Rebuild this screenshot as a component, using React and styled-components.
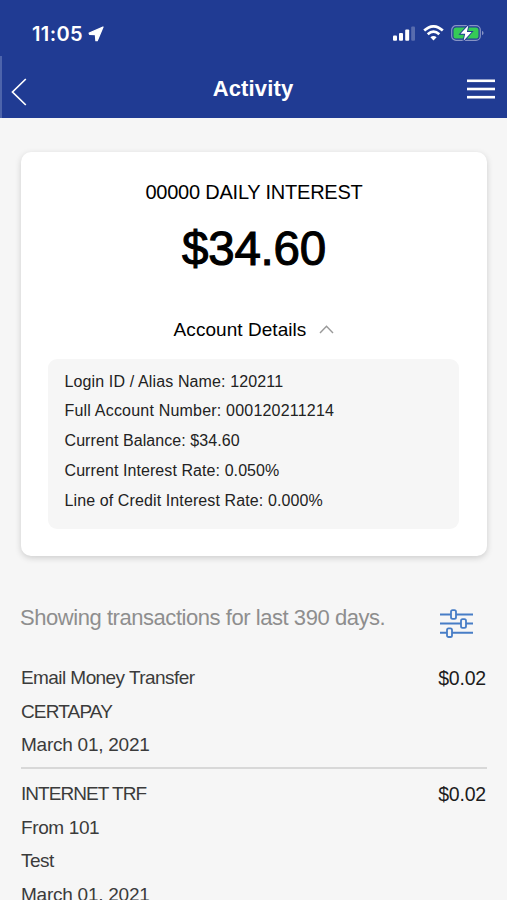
import React from 'react';
import styled, { createGlobalStyle } from 'styled-components';

const GlobalStyle = createGlobalStyle`
    * {
        box-sizing: border-box;
    }
    body {
        margin: 0;
        background-color: #f6f6f6;
        font-family: "Liberation Sans", Arial, sans-serif;
        color: #000;
        overflow: hidden;
    }
`;

const Screen = styled.div`
    width: 507px;
    height: 900px;
    display: flex;
    flex-direction: column;
    overflow: hidden;
`;

const Header = styled.header`
    height: 118px;
    flex-shrink: 0;
    background-color: #203b93;
    color: #fff;
`;

const StatusBar = styled.div`
    height: 56px;
    padding: 10px 23px 0 32px;
    display: flex;
    align-items: center;
    justify-content: space-between;
`;

const Clock = styled.div`
    display: flex;
    align-items: center;
    gap: 5px;
    padding-top: 1px;
    font-family: Inter, sans-serif;
    font-size: 20px;
    font-weight: 600;
    letter-spacing: 0.4px;
`;

const StatusIcons = styled.div`
    display: flex;
    align-items: center;
    gap: 7.5px;
`;

const NavBar = styled.div`
    height: 62px;
    padding: 4px 12px 0 9px;
    border-left: 2px solid #4d64ab;
    display: grid;
    grid-template-columns: 30px 1fr 30px;
    align-items: center;
`;

const Title = styled.h1`
    margin: 0;
    font-size: 22px;
    line-height: 26px;
    font-weight: 700;
    letter-spacing: 0.15px;
    text-align: center;
`;

const IconButton = styled.button`
    border: none;
    padding: ${props => props.$padding || '0'};
    background: none;
    color: inherit;
    display: flex;
    justify-content: ${props => props.$align || 'flex-start'};
`;

const Card = styled.section`
    width: 466px;
    height: 404px;
    margin: 34px 0 0 21px;
    padding: 25px 27px 27px;
    flex-shrink: 0;
    border-radius: 10px;
    background-color: #fff;
    box-shadow: 0 2px 6px rgba(0, 0, 0, 0.17);
`;

const AccountName = styled.div`
    font-size: 20px;
    line-height: 30px;
    letter-spacing: -0.22px;
    text-align: center;
`;

const Balance = styled.div`
    margin-top: 12px;
    font-size: 47.5px;
    line-height: 60px;
    letter-spacing: -0.2px;
    text-align: center;
    -webkit-text-stroke: 1.1px #000;
`;

const Toggle = styled.div`
    margin-top: 36px;
    display: flex;
    align-items: center;
    justify-content: center;
    gap: 13px;
    font-size: 19px;
    line-height: 30px;
    letter-spacing: 0.05px;
`;

const Details = styled.div`
    width: 411px;
    height: 170px;
    margin-top: 13.5px;
    padding: 8px 16.5px;
    border-radius: 9px;
    background-color: #f6f6f6;
`;

const Detail = styled.div`
    font-size: 16px;
    line-height: 29.9px;
    letter-spacing: ${props => props.$spacing || '0px'};
    color: #222;
`;

const Summary = styled.div`
    height: 34px;
    margin: 46px 34px 0 20px;
    display: flex;
    align-items: flex-start;
    justify-content: space-between;
    flex-shrink: 0;
`;

const SummaryText = styled.span`
    font-size: 22px;
    line-height: 32px;
    letter-spacing: -0.45px;
    color: #8e8e8e;
`;

const FilterIcon = styled.svg`
    margin-top: 6.5px;
`;

const List = styled.div`
    margin: 17px 20px 0 21px;
`;

const Row = styled.div`
    padding: 8px 0 5.5px;
    display: flex;
    justify-content: space-between;
    border-bottom: 2px solid #d8d8d8;
`;

const Line = styled.div`
    font-size: 19px;
    line-height: 33.6px;
    letter-spacing: ${props => props.$spacing || '0px'};
    color: #3b3b3b;
`;

const Amount = styled.div`
    padding-right: 1px;
    font-size: 19.5px;
    line-height: 34.4px;
    letter-spacing: -0.2px;
    color: #1c1c1c;
`;

const details = [
    { text: 'Login ID / Alias Name: 120211', spacing: '0.13px' },
    { text: 'Full Account Number: 000120211214', spacing: '0.2px' },
    { text: 'Current Balance: $34.60', spacing: '0.08px' },
    { text: 'Current Interest Rate: 0.050%', spacing: '0.08px' },
    { text: 'Line of Credit Interest Rate: 0.000%', spacing: '0.11px' }
];

const transactions = [
    {
        id: 1,
        amount: '$0.02',
        lines: [
            { text: 'Email Money Transfer', spacing: '-0.57px' },
            { text: 'CERTAPAY', spacing: '-0.85px' },
            { text: 'March 01, 2021', spacing: '-0.25px' }
        ]
    },
    {
        id: 2,
        amount: '$0.02',
        lines: [
            { text: 'INTERNET TRF', spacing: '-0.95px' },
            { text: 'From 101', spacing: '-0.38px' },
            { text: 'Test', spacing: '-0.55px' },
            { text: 'March 01, 2021', spacing: '-0.25px' }
        ]
    }
];

const LocationArrow = () => (
    <svg width="16" height="16" viewBox="0 0 16 16">
        <path d="M15 1 L1.2 7.2 L1.6 8.4 L7.4 8.7 L7.9 14.6 L9.2 14.7 Z" fill="#fff" stroke="#fff" strokeWidth="1.3" strokeLinejoin="round" />
    </svg>
);

const Signal = () => (
    <svg width="22" height="15" viewBox="0 0 22 15">
        <rect x="0" y="9.5" width="4" height="5.2" rx="1" fill="#fff" />
        <rect x="6" y="7" width="4" height="7.7" rx="1" fill="#fff" />
        <rect x="12.2" y="3.5" width="4" height="11.2" rx="1" fill="#fff" />
        <rect x="18.2" y="0.5" width="3.8" height="14.2" rx="1" fill="#fff" opacity="0.25" />
    </svg>
);

const Wifi = () => (
    <svg width="21" height="16" viewBox="0 0 21 16" fill="none" stroke="#fff" strokeWidth="2.7">
        <path d="M1.2 5.6 Q10.5 -2.8 19.8 5.6" />
        <path d="M4.7 9.2 Q10.5 4 16.3 9.2" />
        <path d="M10.5 15.5 L7.4 12.3 Q10.5 9.8 13.6 12.3 Z" fill="#fff" stroke="none" />
    </svg>
);

const Battery = () => (
    <svg width="33" height="18" viewBox="0 0 33 18">
        <rect x="0.7" y="1.7" width="28.6" height="14.6" rx="4.3" fill="none" stroke="#8794c5" strokeWidth="1.2" />
        <path d="M31 6.8 Q32.6 7.6 32.6 9 Q32.6 10.4 31 11.2 Z" fill="#8794c5" />
        <rect x="2.5" y="3.4" width="25" height="11.2" rx="2.6" fill="#35cb57" />
        <path d="M17.4 1.2 L9.5 9.8 H14.2 L12.6 16.8 L20.6 8 H15.9 Z" fill="#fff" stroke="#203b93" strokeWidth="1.8" paintOrder="stroke" />
    </svg>
);

const Back = () => (
    <svg width="16" height="28" viewBox="0 0 16 28" fill="none" stroke="#fff" strokeWidth="1.7">
        <path d="M14.8 1 L1.5 14 L14.8 27" />
    </svg>
);

const Menu = () => (
    <svg width="28" height="21" viewBox="0 0 28 21" fill="#fff">
        <rect y="0.5" width="28" height="2.6" />
        <rect y="8.7" width="28" height="2.6" />
        <rect y="16.9" width="28" height="2.6" />
    </svg>
);

const ChevronUp = () => (
    <svg width="15" height="11" viewBox="0 0 15 11" fill="none" stroke="#999" strokeWidth="1.4">
        <path d="M1 8 L7.5 1.2 L14 8" />
    </svg>
);

const Filter = () => (
    <FilterIcon width="33" height="29" viewBox="0 0 33 29" fill="none" stroke="#477dc6" strokeWidth="2">
        <path d="M0 5.5 H11 M16 5.5 H33 M0 14.5 H21 M26 14.5 H33 M0 23.7 H7 M12 23.7 H33" />
        <rect x="11" y="1.2" width="5" height="8.6" rx="1.6" strokeWidth="1.8" />
        <rect x="21" y="10.2" width="5" height="8.6" rx="1.6" strokeWidth="1.8" />
        <rect x="7" y="19.4" width="5" height="8.6" rx="1.6" strokeWidth="1.8" />
    </FilterIcon>
);

export default () => (
    <>
        <GlobalStyle />
        <Screen>
            <Header>
                <StatusBar>
                    <Clock>
                        <span>11:05</span>
                        <LocationArrow />
                    </Clock>
                    <StatusIcons>
                        <Signal />
                        <Wifi />
                        <Battery />
                    </StatusIcons>
                </StatusBar>
                <NavBar>
                    <IconButton $padding="6px 0 0"><Back /></IconButton>
                    <Title>Activity</Title>
                    <IconButton $align="flex-end"><Menu /></IconButton>
                </NavBar>
            </Header>
            <Card>
                <AccountName>00000 DAILY INTEREST</AccountName>
                <Balance>$34.60</Balance>
                <Toggle>
                    <span>Account Details</span>
                    <ChevronUp />
                </Toggle>
                <Details>
                    {details.map(item => (
                        <Detail key={item.text} $spacing={item.spacing}>{item.text}</Detail>
                    ))}
                </Details>
            </Card>
            <Summary>
                <SummaryText>Showing transactions for last 390 days.</SummaryText>
                <Filter />
            </Summary>
            <List>
                {transactions.map(({ id, amount, lines }) => (
                    <Row key={id}>
                        <div>
                            {lines.map(line => (
                                <Line key={line.text} $spacing={line.spacing}>{line.text}</Line>
                            ))}
                        </div>
                        <Amount>{amount}</Amount>
                    </Row>
                ))}
            </List>
        </Screen>
    </>
);
